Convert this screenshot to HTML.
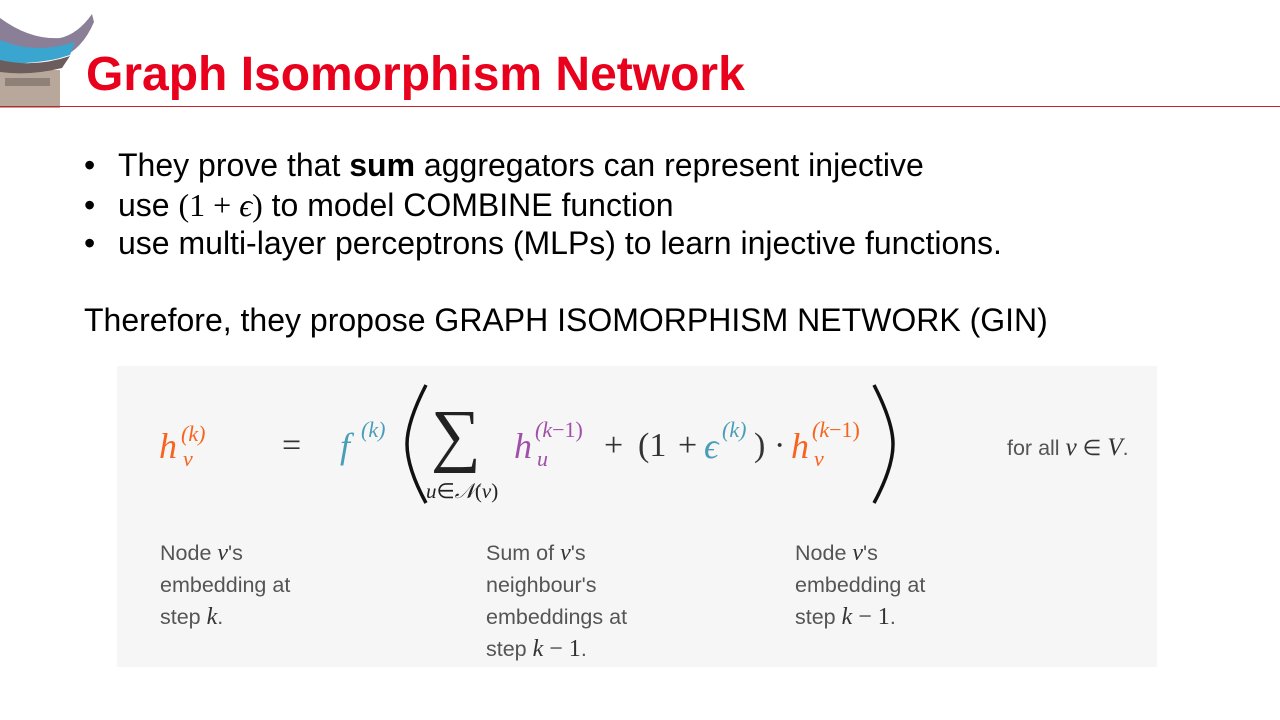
<!DOCTYPE html>
<html><head><meta charset="utf-8"><style>
*{margin:0;padding:0;box-sizing:border-box}
body{width:1280px;height:720px;background:#fff;position:relative;overflow:hidden;font-family:"Liberation Sans",sans-serif}
.a{position:absolute;white-space:nowrap}
.t{font-size:32px;color:#000;line-height:36px}
.m{font-family:"Liberation Serif",serif}
.i{font-style:italic}
.or{color:#f7641e}.te{color:#4a9db8}.pu{color:#a050a8}
.big{font-size:36px;line-height:40px}
.sup{font-size:22px;line-height:24px}
.op{font-size:34px;line-height:40px;color:#333}
.lbl{font-size:21.5px;color:#555;line-height:32px;font-family:"Liberation Sans",sans-serif}
.lbl i{font-family:"Liberation Serif",serif;font-size:24px;color:#333}
</style></head><body>
<svg class="a" style="left:0;top:0" width="96" height="108" viewBox="0 0 96 108">
<rect x="0" y="70" width="60" height="38" fill="#b8a89c"/>
<rect x="5" y="78" width="45" height="8" fill="#8f8078"/>
<path d="M0 18 Q30 40 60 38 Q78 34 92 14 L94 22 Q82 50 60 58 Q30 66 0 52Z" fill="#8a7f96"/>
<path d="M0 40 Q35 55 75 42 L70 55 Q35 66 0 62Z" fill="#3aa6d0"/>
<path d="M0 60 Q35 68 70 56 L62 68 Q30 76 0 72Z" fill="#6c5c5c"/>
</svg>
<div class="a" style="left:86px;top:47px;font-size:48px;font-weight:bold;color:#e8001c;line-height:56px">Graph Isomorphism Network</div>
<div class="a" style="left:0;top:106px;width:1280px;height:1px;background:#c8232a"></div>

<div class="a t" style="left:84px;top:147px">•</div>
<div class="a t" style="left:118px;top:147px">They prove that <b>sum</b> aggregators can represent injective</div>
<div class="a t" style="left:84px;top:187px">•</div>
<div class="a t" style="left:118px;top:187px">use <span class="m">(1 + <i>ϵ</i>)</span> to model COMBINE function</div>
<div class="a t" style="left:84px;top:225px">•</div>
<div class="a t" style="left:118px;top:225px">use multi-layer perceptrons (MLPs) to learn injective functions.</div>
<div class="a t" style="left:84px;top:302px">Therefore, they propose GRAPH ISOMORPHISM NETWORK (GIN)</div>

<div class="a" style="left:117px;top:366px;width:1040px;height:301px;background:#f6f6f6"></div>

<div class="a m i or big" style="left:159px;top:426px">h</div>
<div class="a m i or sup" style="left:181px;top:422px">(k)</div>
<div class="a m i or sup" style="left:183px;top:447px">v</div>
<div class="a m op" style="left:282px;top:426px">=</div>
<div class="a m i te big" style="left:340px;top:426px">f</div>
<div class="a m i te sup" style="left:361px;top:418px">(k)</div>
<svg class="a" style="left:402px;top:382px" width="30" height="124"><path d="M24 3 Q5 40 5 62 Q5 86 24 121" stroke="#111" stroke-width="3.5" fill="none"/></svg>
<div class="a m" style="left:431px;top:396px;font-size:70px;line-height:80px;color:#222">∑</div>
<div class="a m" style="left:426px;top:479px;font-size:21px;color:#222"><i>u</i>∈<i>𝒩</i>(<i>v</i>)</div>
<div class="a m i pu big" style="left:514px;top:426px">h</div>
<div class="a m pu sup" style="left:535px;top:418px"><i>(k</i>−1)</div>
<div class="a m i pu sup" style="left:537px;top:447px">u</div>
<div class="a m op" style="left:604px;top:426px">+</div>
<div class="a m op" style="left:638px;top:426px">(1</div>
<div class="a m op" style="left:678px;top:426px">+</div>
<div class="a m i te big" style="left:704px;top:426px">ϵ</div>
<div class="a m i te sup" style="left:722px;top:418px">(k)</div>
<div class="a m op" style="left:754px;top:426px">)</div>
<div class="a m op" style="left:774px;top:426px">·</div>
<div class="a m i or big" style="left:791px;top:426px">h</div>
<div class="a m or sup" style="left:812px;top:418px"><i>(k</i>−1)</div>
<div class="a m i or sup" style="left:814px;top:447px">v</div>
<svg class="a" style="left:868px;top:382px" width="30" height="124"><path d="M6 3 Q25 40 25 62 Q25 86 6 121" stroke="#111" stroke-width="3.5" fill="none"/></svg>
<div class="a" style="left:1007px;top:434px;font-size:21.5px;color:#555">for all <span class="m i" style="font-size:25px;color:#333">v</span> <span class="m" style="color:#333">∈</span> <span class="m i" style="font-size:25px;color:#333">V</span>.</div>

<div class="a lbl" style="left:160px;top:537px">Node <i>v</i>'s<br>embedding at<br>step <i>k</i>.</div>
<div class="a lbl" style="left:486px;top:537px">Sum of <i>v</i>'s<br>neighbour's<br>embeddings at<br>step <i>k</i> <span class="m" style="font-size:24px;color:#333">− 1</span>.</div>
<div class="a lbl" style="left:795px;top:537px">Node <i>v</i>'s<br>embedding at<br>step <i>k</i> <span class="m" style="font-size:24px;color:#333">− 1</span>.</div>
</body></html>
